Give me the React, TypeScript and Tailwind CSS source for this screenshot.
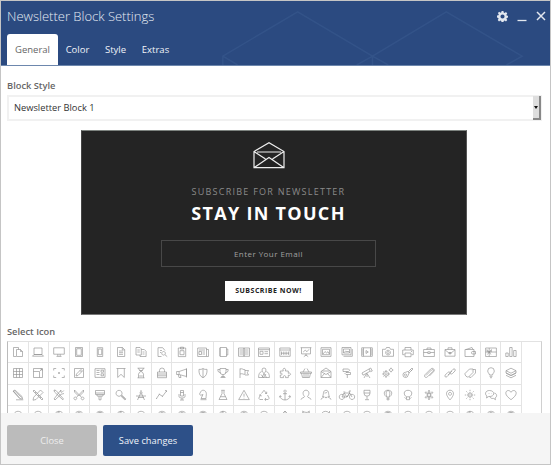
import React from "react";

// Outline icons drawn on a 12x12 canvas, one path string per grid cell.
const ROW_1: string[] = [
  "M4 10.5H1.5V1.5h5v2M4.5 3.5h4l2 2v5h-6zM8.5 3.5v2h2",
  "M2 2h8v6.5H2zM.5 10.2h11L10 8.5H2z",
  "M.7 1.8h10.6v6.4H.7zM4.8 8.2v2M7.2 8.2v2M3.5 10.4h5",
  "M2.5 1.5h7v9h-7zM3.7 2.7h4.6v6.6H3.7z",
  "M3.3 1.7h5.4v8.8H3.3zM4.3 3.1h3.4v5.6H4.3z",
  "M2.5 1.5h5l2.2 2.2v6.8H2.5zM7.3 1.5v2.4h2.4M4 5h4M4 6.7h4M4 8.4h4",
  "M1 1.5h4l1.3 1.3V9H1zM6.3 3.5h3l1.8 1.8v5.2H5V9M2.3 4h2.5M2.3 6h2.5M7.5 6h2M7.5 8h2",
  "M9 4.5L6.7 1.7H2v8.8h3.5M4 4.5h2M4 6.5h1M7.5 5.5a1.8 1.8 0 1 0 .1 0M9 8.8l2.2 1.8",
  "M2.3 2h7.4v8.6H2.3zM4.5 1.2h3V3h-3zM4 4.7h4v4H4z",
  "M.7 2h8.8v8.5H.7zM9.5 3.5h2v7h-2M2 4h6M2 5.5h2.5v3H2zM5.5 6H8M5.5 8H8",
  "M3 1.5h6.5v9H3zM2 3h2M2 5h2M2 7h2M2 9h2M9.5 3h1.3v6H9.5",
  "M.5 2H6v8.3H.5zM6 2h5.5v8.3H6zM1.5 4H5M1.5 6H5M1.5 8H5M7 4h3.5M7 6h3.5M7 8h3.5",
  "M.5 2h11v8.5H.5zM.5 3.7h11M2 5.3h3v3H2zM6.5 5.7H10M6.5 7.7H10",
  "M.8 2h10.4v8.3H.8zM.8 4h10.4M2.5 5.5v3.5M4.8 5.5V9M7.1 5.5V9M9.4 5.5V9M2 7.2h8",
  "M.6 1.7h10.8M1.5 1.7v6.2h9V1.7M6 7.9V10M3.8 10.7L6 9l2.2 1.7M3.2 6l2-1.8L7 5.7 9 3.3",
  "M1 1.7h10v8.7H1zM2.5 3.3h7v5.4h-7zM3 8l2-2.5 1.5 1.4L8 5.7 9.3 8",
  "M1 1.5h9v7.3H1zM11.3 3v7.3H2.5M2.5 3h6v4h-6zM3 6.7l1.8-1.8L6 6l1-1 1.5 1.7",
  "M.7 1.8h10.6v8.5H.7zM2.5 1.8v8.5M9.5 1.8v8.5M.7 4h1.8M.7 6h1.8M.7 8h1.8M9.5 4h1.8M9.5 6h1.8M9.5 8h1.8M5 4.5v3L7.3 6z",
  "M.5 3.3h3L4.5 1.5h3L8.5 3.3h3v7H.5zM6 4.2a2.4 2.4 0 1 0 .1 0M6 5.5a1.1 1.1 0 1 0 .1 0",
  "M3 4V1.5h6V4M2.5 8.7H.7V4h10.6v4.7H9.5M3 7h6v3.7H3zM9 5.5h1",
  "M.6 3.5h10.8v7H.6zM4 3.5V2h4v1.5M.6 6.5h4.2M7.2 6.5h4.2M4.8 5.8h2.4v1.7H4.8z",
  "M1 3.5h10v6.7H1zM4 3.5V1.8h4v1.7M1 3.8l4 3.3h2l4-3.3M5 6.5h2v1.3H5z",
  "M1 3.5h9v7H1zM2 3.5l6-2 1 2M10 5.5h1.5V8H8.7a1.2 1.2 0 0 1 0-2.5H10",
  "M.6 2h10.8v8.5H.6zM.6 6h10.8M4.2 2v8.5M4.2 6L2 3.6v2zM4.2 6l2.2-2.4v2zM4.2 6L2.5 8.5M4.2 6l1.7 2.5",
  "M.8 7h2.4v3.5H.8zM4.7 1.5h2.4v9H4.7zM8.7 4.5h2.4v6H8.7z",
];

const ROW_2: string[] = [
  "M1.5 1.5h9v9h-9zM1.5 4.5h9M1.5 7.5h9M4.5 1.5v9M7.5 1.5v9",
  "M1.5 1.5h9v9h-9zM1.5 4.5h6v6M8 4l2-2M8.3 2H10v1.7",
  "M.7 3.5V1.5h2.5M8.8 1.5h2.5v2M11.3 8.5v2H8.8M3.2 10.5H.7v-2M6 5v2M5 6h2",
  "M1.5 1.5h9v9h-9zM3 9l.5-2L8 2.5 9.5 4 5 8.5zM7 3.5L8.5 5",
  "M1 1.7h10v8.7H1zM2.5 3.5h3M2.5 5.5h3M2.5 7.5h3M7 3.2h2.5v2H7zM7 6.8h2.5v2H7z",
  "M1.5 1.5h9M2.7 1.5v9L6 7.3l3.3 3.2v-9",
  "M2.5 1.2h7M2.5 10.8h7M3.5 1.2c0 2.8 5 3.5 5 6v3.6M8.5 1.2c0 2.8-5 3.5-5 6v3.6M4.2 3.5h3.6M4.2 9h3.6",
  "M1.5 5h9v5.7h-9zM3.5 5V3.5a2.5 2.5 0 0 1 5 0V5M1.5 7h9M1.5 8.8h9",
  "M.6 4.5h2.5L10.5 2v7.5L3.1 7.5H.6zM3.1 4.5v3M2.2 7.5l.8 3h2l-.8-2.5M10.5 1.3v9.2",
  "M6 1.5c-1.2 1-2.7 1-4 .8-.3 4 .8 7 4 8.4 3.2-1.4 4.3-4.4 4-8.4-1.3.2-2.8.2-4-.8zM6 1.5v9.2",
  "M3 1.5h6v3.2a3 3 0 0 1-6 0zM3 2.5H.8c0 2.3 1 3 2.8 3.3M9 2.5h2.2c0 2.3-1 3-2.8 3.3M6 7.7v2M3.5 10.5h5M4.2 9.5h3.6",
  "M2 11V1.5M2 2c2.5-1 3.5 1.2 5 .7v4.6C5.5 7.8 4.5 6 2 7M7 3.5h3.5L9.3 5.8l1.2 2.2H7",
  "M6 1a2 2 0 0 1 2 2c0 1.4-2 3.5-2 3.5S4 4.4 4 3a2 2 0 0 1 2-2zM3.7 4.5C1.5 5 .5 7.5.6 10.5h10.8c.1-3-.9-5.5-3.1-6M3 7.5l2.5 3L8 7M4 10.5l2-4 2.5 4",
  "M1.3 4h3c-.8-1.7 0-2.7 1-2.7s1.8 1 1 2.7h3v2.3c1.3-.7 2.2 0 2.2.9s-.9 1.7-2.2.9v2.5H6.500c.5-1.5-.2-2-1-2s-1.5.5-1 2H1.300V8c1.500.5 1.700-.3 1.700-.9s-.2-1.300-1.700-.8z",
  "M.5 5h11v1.3H.5zM1.5 6.3l1 4.2h7l1-4.2M3 5l2-3.5M9 5L7 1.5M4 6.5v3.8M6 6.5v3.8M8 6.5v3.8",
  "M1 4.5L6 1l5 3.5v6H1zM1 4.5l5 3 5-3M1 10.5l3.5-4M11 10.5l-3.5-4M2.5 4h7",
  "M2 2h5.5l1.2 1.2-1.2 1.3H2zM5 5.5h4.5v2H5L4 6.5zM6 4.5v1M6.3 7.5V11",
  "M1 6l7-4 1.2 2.2-7.2 4zM8 2l1.7-1 1.6 3-1.9.7M5.5 6.5L3 11M6 6.5l3 4.5M6 6.5V10",
  "M4 4.3a2.5 2.5 0 1 0 .1 0M4 5.7a1.1 1.1 0 1 0 .1 0M4 3v1.3M4 9.3V11M.2 7h1.3M6.5 7H8M1.5 4.5l.8.8M6 8.5l.8.8M1.5 9.5l.8-.8M9 1.5a1.5 1.5 0 1 0 .1 0M9 .7v.8M9 4.5v.8M6.8 3h.8M10.5 3h.8",
  "M3.5 5.3a2.6 2.6 0 1 0 2.6 3l1-2.3-1.5-1.5zM6 5l4-4 1 1-4 4M3.5 7a1 1 0 1 0 .1 0M8.5 2.5L10 4",
  "M3 8.5L8.5 3c1.2-1.2 2.5.2 1.5 1.3L4.5 9.8C2.8 11.5.5 9.5 2 7.7L7.7 2c2-2 4.8.8 3 2.6L6.5 8.9",
  "M6.5 5L9 2.3c1.5-1.2 3 .3 2 1.700L8.500 6.500C7.500 7.500 6 7 6 5.700M5.500 7L3 9.700C1.700 10.800.2 9.500 1.200 8L3.700 5.500c1-1 2.500-.5 2.500.8M4 8l4-4",
  "M1 6.5L5.5 2H9v3.5L4.5 10c-1.5.7-4-1.7-3.5-3.5zM9 2.5h2.5V6L7 10.5 5 10M7.5 3.5h.1",
  "M4.5 8c0-1.5-1.8-2.2-1.8-4a3.3 3.3 0 0 1 6.6 0c0 1.8-1.8 2.5-1.8 4zM4.500 9.300h3M5 10.700h2",
  "M6 1.2l5 2.500-5 2.500-5-2.500zM1 6l5 2.500L11 6M1 8.300l5 2.500 5-2.500M1 3.700V6l5 2.500L11 6V3.700",
];

const ROW_3: string[] = [
  "M1 2l2-1 7 6.5.5 2.5-2.7-.4zM1 2l7 7.5M2 1.5l7.7 7M4 10.8h7.3",
  "M1 2l1-1 9 9-1 1zM8.5 1L11 3.5 4 10.5l-3 .7.7-3zM3 4l1-1M6 7l1-1M8 9l1-1",
  "M1 1l2 .5L10.5 10l-.7.8L1.5 3zM10.8 1.5L9 3.3 7.7 2.8 8 1 5.8 3.7 1 10l1 1 6-5.7 3-.8",
  "M1.5 1l7 7.3M10.5 1l-7 7.3M2.3 8a1.4 1.4 0 1 0 .1 0M9.5 8a1.4 1.4 0 1 0 .1 0M1.5 1v2l4 4M10.5 1v2l-4 4",
  "M1.5 1.5h9v4h-9zM1.5 4h9M3 5.5V7h6V5.5M5 7v3.8h2V7",
  "M4 1.3a3 3 0 1 0 .1 0M6.2 6.4l4.5 4.1M5.8 7l4 3.9 1-1-4-3.8",
  "M6 1v2M6 3a1 1 0 1 0 .1 0M5.4 4.7L2.5 11M6.6 4.7L9.5 11M1 7h10M3 8.5h6",
  "M.5 9.5l2.8-4.2 3.2 2L10.5 2M.6 9v1M3.3 4.7v1M6.5 6.8v1M10.5 1.5H9M10.5 1.5v1.5",
  "M4.5 1.5h3V7h-3zM3 5v2.5c0 2 6 2 6 0V5M6 9v2M4 11h4M4.5 3.5h3",
  "M3.5 10.7h6M4 9.5h5c0-3 .8-4.5 0-6.3C8 .8 5 .8 4 2.3L2.5 5l1 1.3L6 5.5 4 9.5M6 3h.1",
  "M4.3 1.3h3.4M5 1.3v3.4L2 10.5h8L7 4.7V1.3M3.5 7.7h5",
  "M6 1.3l5.3 9.3H.7zM6 4.7v3M6 8.8v.6",
  "M3.5 4.5L6 1.3l2.5 3.2M7 4.5h1.7V2.7M9.5 6l1.7 3.2-1 1.3H7M8 9l-1.3 1.5L8 11.7M5 10.5H1.8l-1-1.3L2.5 6M1 6.3l1.6-.7.7 1.7",
  "M6 1a1.1 1.1 0 1 0 .1 0M6 3.3V11M4 4.7h4M1 7c0 2.3 2.5 4 5 4s5-1.7 5-4M.5 8.3L1 6.7l1.5.8M11.5 8.3L11 6.7l-1.5.8",
  "M1 10.7c0-2 3.5-1.7 3.5-3.3C2 5 3 1.2 6 1.2S10 5 7.5 7.4c0 1.6 3.5 1.3 3.5 3.3",
  "M1 10.7c0-2 3-1.7 3-3H2.500C4 5.500 2.500 1.300 6 1.300S8 5.500 9.500 7.700H8c0 1.300 3 1 3 3M4.500 4c2 0 2.500-.7 2.800-1.200M5 7.800v.8h2v-.8",
  "M.8 5.3a2.6 2.6 0 1 0 .1 0M11 5.3a2.6 2.6 0 1 0 .1 0M1 8l2-4h5.7L6 8 3 4M6 8H1M6 8l2.700-4L11 8M8.700 4L8 2h2M2.300 3h2",
  "M3 1.3h6v2.9a3 3 0 0 1-6 0zM3 4h6M6 7.3v3M4 10.7h4",
  "M6 1.2c-5.300 0-4.300 5.500-1 7h2c3.300-1.500 4.300-7-1-7zM6 1.200c-3 2-1.500 5-1 7M6 1.200c3 2 1.500 5 1 7M5 9.300h2v1.500H5z",
  "M6 1.3c-5 0-4.500 5-1.500 6.500h3c3-1.500 3.500-6.500-1.500-6.500zM4.500 7.800v2.900h3V7.800M2.500 8.500l1.300 1M9.500 8.500l-1.300 1",
  "M6 4.5a1.5 1.5 0 1 0 .1 0M6 4.500c-2.500-4.300 2.500-4.300 0 0M7.300 5.200c1-4.800 5-.8 0 0M7.300 6.800c5 .8 1 4.800 0 0M6 7.500c2.500 4.300-2.500 4.300 0 0M4.700 6.800c-1 4.800-5 .8 0 0M4.700 5.200c-5-.8-1-4.800 0 0",
  "M6 1.2c-2.2 0-3.5 1.6-3.5 3.5C2.5 7 6 11 6 11s3.5-4 3.5-6.3c0-1.9-1.3-3.5-3.5-3.5zM6 3.3a1.5 1.5 0 1 0 .1 0",
  "M6 3.700a2.300 2.300 0 1 0 .1 0M6 4.700a1.300 1.300 0 1 0 .1 0M6 .8v1.400M6 9.800v1.400M.8 6h1.400M9.800 6h1.400M2.300 2.300l1 1M8.700 8.700l1 1M2.300 9.700l1-1M8.700 3.300l1-1",
  "M4.500 1.500C-.2 1.500-.3 6 2 7l-.5 2 2.200-1.500c6.800.5 6.300-6 .8-6zM9.300 4c3 .7 2.900 4 .7 5l.5 1.700-2-1.300c-2 .3-3-.3-3.700-1.700M3 4.500h.3M4.700 4.500H5M6.400 4.500h.3",
  "M6 10.700C3.500 8.700.8 6.500.8 4.200.8 1.200 4.500.5 6 3.300 7.500.5 11.200 1.200 11.200 4.200c0 2.300-2.700 4.500-5.200 6.500z",
];

const ROUND = "M6 1.3a4.5 4.5 0 1 0 .1 0";
const RING = "M6 1.3a4.5 4.5 0 1 0 .1 0M6 2.5a3 3 0 1 0 .1 0";
const GLOBE = "M6 1.3a4.5 4.5 0 1 0 .1 0M6 1.3C3 4 3 8 6 10.3M6 1.3v9";
const DIAL = "M6 1.3a4.5 4.5 0 1 0 .1 0M6 2v4M4 2.7h4";
const ROW_4: string[] = [
  ROUND, ROUND, GLOBE, RING, DIAL, GLOBE, ROUND, RING, RING, DIAL, GLOBE, RING, ROUND,
  "M6 1v9M3 4l3-3 3 3", "M2 4a2 2 0 0 1 2-2c1 0 3 1 4 0a2 2 0 0 1 2 2M2 1l2 1M10 1L8 2",
  "M9 3a4.5 4.5 0 1 0 1 3M9.5 1v2.5", ROUND, ROUND, DIAL, ROUND, ROUND, ROUND, GLOBE, RING, DIAL,
];

const ICONS = [...ROW_1, ...ROW_2, ...ROW_3, ...ROW_4];

function IconCell({ d }: { d: string }) {
  return (
    <div className="flex items-center justify-center border-r border-b border-[#e4e4e4]">
      <svg viewBox="0 0 12 12" className="h-3 w-3 shrink-0 overflow-visible" fill="none" stroke="#8f8f8f" strokeWidth="0.65">
        <path d={d} />
      </svg>
    </div>
  );
}

function Header() {
  return (
    <header className="relative flex h-[65px] shrink-0 flex-col justify-between overflow-hidden border-b border-[#6d87ad] bg-[#2b4a80]">
      <svg className="absolute inset-0 h-full w-full" viewBox="1 1 549 65" fill="none" stroke="#335388" strokeWidth="1.5">
        <path d="M222 66V57L298 12l76 45 75-45 77 45-16 9M222 57l15 9M374 66V57l-16 9M374 57l16 9" />
      </svg>
      <div className="relative flex h-[30px] items-center justify-between pr-1 pl-[6px]">
        <h1 className="text-[13px] leading-none font-light text-[#e5ebf4]">Newsletter Block Settings</h1>
        <div className="flex items-center gap-[9px] text-[#e2e7ef]">
          <svg viewBox="0 0 24 24" className="h-[11px] w-[11px]" fill="currentColor">
            <path fillRule="evenodd" d="M10 0h4l.7 3.5 2 .9 2.9-2 2.8 2.8-1.900 2.900.9 2 3.300.5v3.600l-3.300.8-.9 2 1.900 2.900-2.800 2.800-2.900-1.900-2 .9-.7 3.300h-4l-.7-3.300-2-.9-2.900 1.900-2.800-2.800 1.900-2.900-.9-2L0 14v-4l3.100-.5.9-2L2 4.600 4.800 1.800l2.700 1.900 2-.9zM12 7.500a4.500 4.500 0 1 0 0 9 4.500 4.500 0 0 0 0-9z" />
          </svg>
          <svg viewBox="0 0 10 12" className="h-3 w-[10px]" stroke="currentColor" strokeWidth="1.3"><path d="M.5 10.5h9" /></svg>
          <svg viewBox="0 0 10 10" className="h-[10px] w-[10px]" stroke="currentColor" strokeWidth="1.5"><path d="M1 1l8 8M9 1L1 9" /></svg>
        </div>
      </div>
      <nav className="relative flex h-[31px] pl-[6px] text-[9.5px] text-[#f0f3f8]">
        <span className="flex w-[51px] items-center justify-center rounded-t-[3px] bg-white pt-px text-[#666]">General</span>
        <span className="flex w-[39px] items-center justify-center pt-px">Color</span>
        <span className="flex w-[37px] items-center justify-center pt-px">Style</span>
        <span className="flex w-[43px] items-center justify-center pt-px">Extras</span>
      </nav>
    </header>
  );
}

function Preview() {
  return (
    <section className="mt-[9px] ml-[74px] flex h-[185px] w-[386px] shrink-0 flex-col items-center border border-t-[#7d837f] border-r-[#555] border-b-[#777] border-l-[#444] bg-[#242424] pr-[11px]">
      <svg viewBox="0 0 32 27" className="mt-[11px] h-[27px] w-8" fill="none" stroke="#eee" strokeWidth="1.2">
        <path d="M1 9.5L16 .8l15 8.700v16.200H1zM1 9.500l11.500 7.500M31 9.500L19.500 17M1 25.700L16 15.500l15 10.200M4 10h24" />
      </svg>
      <p className="mt-[17px] text-[9px] leading-3 tracking-[1.25px] text-[#8a8a8a]">SUBSCRIBE FOR NEWSLETTER</p>
      <h2 className="mt-[4px] text-[18px] leading-[22px] font-bold tracking-[1.3px] text-white">STAY IN TOUCH</h2>
      <div className="mt-4 flex h-[27px] w-[215px] items-center justify-center border border-[#484848] text-[8px] tracking-[0.45px] text-[#a0a0a0]">Enter Your Email</div>
      <button className="mt-[14px] h-5 w-[88px] bg-white text-[7px] font-bold tracking-[0.5px] text-[#222]">SUBSCRIBE NOW!</button>
    </section>
  );
}

export default function App() {
  return (
    <div className="flex h-[465px] w-[551px] flex-col overflow-hidden border border-[#c5c5c5] bg-white font-['Open_Sans',sans-serif]">
      <Header />
      <main className="flex min-h-0 flex-1 flex-col overflow-hidden pr-2 pl-[6px]">
        <label className="mt-[13px] text-[9.3px] leading-[14px] font-semibold text-[#666]">Block Style</label>
        <div className="mt-[2px] flex h-[26px] w-[535px] shrink-0 items-center justify-between border-2 border-[#f1f1f1] pl-[5px] text-[9.3px] text-[#333]">
          <span>Newsletter Block 1</span>
          <span className="-mr-px flex h-6 w-2 items-center justify-center border-r-2 border-b-2 border-[#888] bg-[#dedede]">
            <svg viewBox="0 0 4 3" className="h-[3px] w-1"><path d="M0 0h4L2 3z" fill="#111" /></svg>
          </span>
        </div>
        <Preview />
        <label className="mt-[10px] text-[9.3px] leading-[14px] font-semibold text-[#666]">Select Icon</label>
        <div className="mt-[2px] h-[90px] w-[535px] shrink-0 border border-[#e2e2e2] border-r-[#d0d0d0] border-l-[#bbb]">
          <div className="grid w-[514px] auto-rows-[21.33px] grid-cols-25">
            {ICONS.map((d, i) => (
              <IconCell key={i} d={d} />
            ))}
          </div>
        </div>
      </main>
      <footer className="flex h-[51px] shrink-0 gap-[6px] bg-[#f5f5f5] px-[6px] pt-3 text-[9.3px]">
        <button className="h-[31px] w-[90px] rounded-[2px] bg-[#bbb] text-[#eee]">Close</button>
        <button className="h-[31px] w-[90px] rounded-[2px] bg-[#2d5088] text-[#f0f4fa]">Save changes</button>
      </footer>
    </div>
  );
}
